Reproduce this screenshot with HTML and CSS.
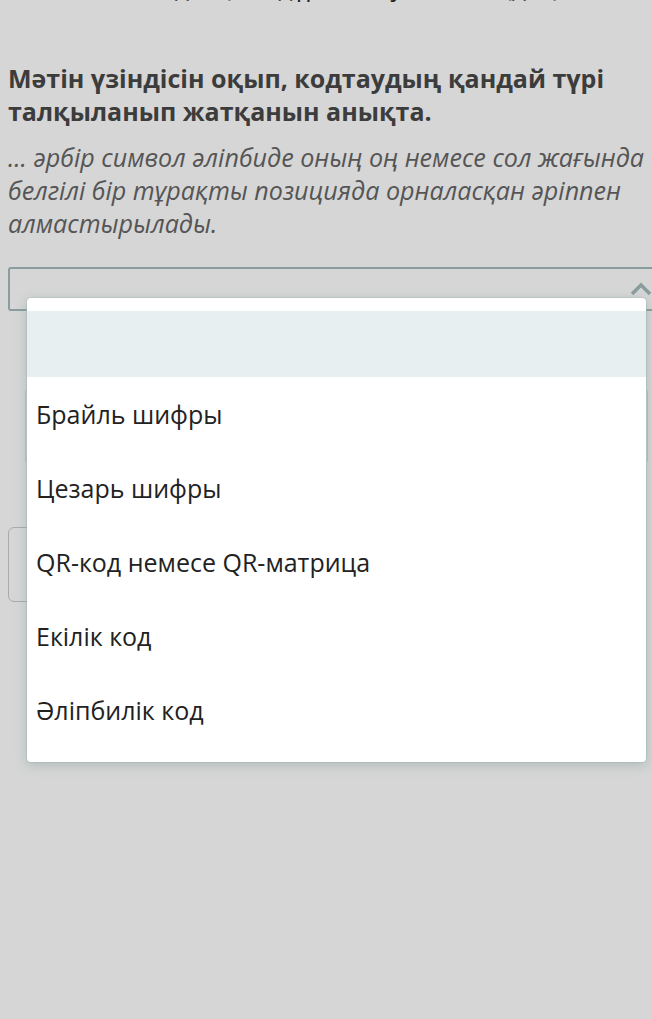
FILE: index.html
```html
<!DOCTYPE html>
<html lang="kk">
<head>
<meta charset="utf-8">
<link rel="stylesheet" href="styles.css">
</head>
<body>
<div class="page">
  <p class="cut">Төменгі мәтінді оқып, дұрыс жауапты таңдаңыз</p>
  <h2 class="question">Мәтін үзіндісін оқып, кодтаудың қандай түрі талқыланып жатқанын анықта.</h2>
  <p class="prompt">... әрбір символ әліпбиде оның оң немесе сол жағында<br>белгілі бір тұрақты позицияда орналасқан әріппен<br>алмастырылады.</p>
  <div class="select-wrap">
    <div class="select">
      <svg class="chevron" width="22" height="14" viewBox="0 0 22 14"><path d="M2 12 L11 3 L20 12" fill="none" stroke="#8a9c9e" stroke-width="3.5"/></svg>
    </div>
    <div class="behind-box"></div>
    <div class="behind-btn"></div>
    <ul class="dropdown">
      <li class="opt empty"></li>
      <li class="opt">Брайль шифры</li>
      <li class="opt">Цезарь шифры</li>
      <li class="opt">QR-код немесе QR-матрица</li>
      <li class="opt">Екілік код</li>
      <li class="opt">Әліпбилік код</li>
    </ul>
  </div>
</div>
</body>
</html>
```
FILE: styles.css
```css
html, body {
  margin: 0;
  padding: 0;
  background: #d6d6d6;
  overflow: hidden;
}
body {
  font-family: "Open Sans", "Noto Sans", sans-serif;
  color: #222;
}
.page {
  padding: 0 0 0 8px;
  height: 1019px;
  overflow: hidden;
}
.cut {
  margin: -30px 0 0 0;
  font-size: 25px;
  line-height: 33px;
  color: #222;
  white-space: nowrap;
}
.question {
  margin: 59px 0 0 0;
  font-size: 25px;
  line-height: 33px;
  font-weight: 700;
  color: #3c3c3c;
}
.prompt {
  margin: 13px 0 0 0;
  font-size: 25.1px;
  line-height: 33px;
  font-style: italic;
  color: #555;
  white-space: nowrap;
}
.select-wrap {
  position: relative;
  margin-top: 27px;
}
.select {
  height: 40px;
  margin-right: -20px;
  border: 2px solid #8a9c9e;
  border-radius: 3px;
  position: relative;
}
.chevron {
  position: absolute;
  right: 18px;
  top: 13px;
}
.behind-box {
  margin: 78px 4px 0 17px;
  height: 72px;
  border: 1px solid #b8c4c4;
  border-radius: 3px;
}
.behind-btn {
  margin-top: 64px;
  width: 120px;
  height: 73px;
  border: 1px solid #a9a9a9;
  border-radius: 6px;
}
.dropdown {
  position: absolute;
  top: 31px;
  left: 19px;
  width: 619px;
  margin: 0;
  padding: 13px 0 15px 0;
  list-style: none;
  background: #fff;
  border-radius: 4px;
  box-shadow: 0 3px 12px rgba(120, 150, 150, 0.45), 0 0 0 1px rgba(170, 190, 190, 0.4);
}
.opt {
  height: 74px;
  display: flex;
  align-items: center;
  padding-left: 9px;
  font-size: 25px;
  color: #222;
}
.opt.empty {
  height: 66px;
  background: #e8eff1;
}
```
